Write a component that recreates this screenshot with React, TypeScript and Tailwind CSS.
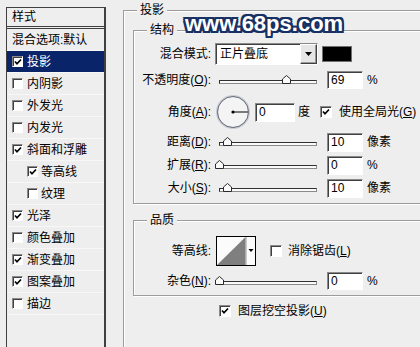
import React from "react";

const FONT = "font-['Liberation_Sans','Noto_Sans_CJK_SC',sans-serif]";
const SUNKEN =
  "border border-[#8a8a8a] border-r-white border-b-white shadow-[inset_1px_1px_0_#404040] bg-white";
const RAISED =
  "border border-white border-r-[#404040] border-b-[#404040] shadow-[inset_-1px_-1px_0_#9a9a9a] bg-[#e6e6e6]";
const ETCHED = "border border-[#9c9c9c] shadow-[inset_1px_1px_0_#fff,1px_1px_0_#fff]";

type Item = { label: string; on?: boolean; box?: boolean; sub?: boolean; active?: boolean };

const items: Item[] = [
  { label: "混合选项:默认" },
  { label: "投影", box: true, on: true, active: true },
  { label: "内阴影", box: true },
  { label: "外发光", box: true },
  { label: "内发光", box: true },
  { label: "斜面和浮雕", box: true, on: true },
  { label: "等高线", box: true, on: true, sub: true },
  { label: "纹理", box: true, sub: true },
  { label: "光泽", box: true, on: true },
  { label: "颜色叠加", box: true },
  { label: "渐变叠加", box: true, on: true },
  { label: "图案叠加", box: true, on: true },
  { label: "描边", box: true },
];

function Check({ on, small }: { on?: boolean; small?: boolean }) {
  return (
    <span
      className={`${small ? "w-[11px] h-[11px]" : "w-[12px] h-[12px]"} shrink-0 flex items-center justify-center ${SUNKEN}`}
    >
      {on && (
        <svg width="8" height="8" viewBox="0 0 8 8" aria-hidden="true">
          <path d="M1 3.5 L3 5.8 L7 1.5" fill="none" stroke="#000" strokeWidth="1.7" />
        </svg>
      )}
    </span>
  );
}

function StyleList() {
  return (
    <div className="ml-[6px] mt-[7px] w-[100px] h-[345px] shrink-0 border border-[#404040] border-r-2 bg-[#eeeeee]">
      <div className="h-[21px] pl-[5px] flex items-center border-b-[3px] border-double border-[#404040]">
        样式
      </div>
      {items.map((it) => (
        <div
          key={it.label}
          className={`h-[22px] flex items-center border-b border-b-[#f7f7f7] ${it.sub ? "pl-[20px]" : "pl-[5px]"} ${
            it.active ? "bg-[#0a246a] text-white" : ""
          }`}
        >
          {it.box && <Check on={it.on} small />}
          <span className={it.box ? (it.sub ? "ml-[3px]" : "ml-[4px]") : ""}>{it.label}</span>
        </div>
      ))}
    </div>
  );
}

function Legend({ children }: { children: React.ReactNode }) {
  return (
    <div className="-mt-[9px] ml-[13px] flex">
      <span className="bg-[#eeeeee] px-[3px]">{children}</span>
    </div>
  );
}

function Slider({ pct }: { pct: number }) {
  return (
    <div className="relative ml-[4px] w-[106px] h-[10px] shrink-0">
      <div className="mt-[5px] ml-[4px] w-[98px] h-[4px] border border-[#8a8a8a] border-t-[#303030] border-l-[#303030] bg-[#fafafa]" />
      <svg
        className="absolute top-0"
        style={{ left: 4 + pct * 98 - 4.5 }}
        width="9"
        height="9"
        viewBox="0 0 9 9"
        aria-hidden="true"
      >
        <polygon points="0.5,8.5 0.5,4 4.5,0.5 8.5,4 8.5,8.5" fill="#fafafa" stroke="#2a2a2a" />
      </svg>
    </div>
  );
}

function Field({ value, w = "w-[36px]", h = "h-[18px]" }: { value: string; w?: string; h?: string }) {
  return (
    <div className={`${w} ${h} shrink-0 flex items-center pl-[3px] ${SUNKEN}`}>{value}</div>
  );
}

function SliderRow({
  label,
  pct,
  value,
  unit,
  mt,
}: {
  label: React.ReactNode;
  pct: number;
  value: string;
  unit: string;
  mt: string;
}) {
  return (
    <div className={`${mt} h-[20px] flex items-center`}>
      <span className="w-[77px] text-right shrink-0">{label}</span>
      <Slider pct={pct} />
      <div className="ml-[6px]">
        <Field value={value} h="h-[19px]" />
      </div>
      <span className="ml-[4px]">{unit}</span>
    </div>
  );
}

export default function App() {
  return (
    <div
      className={`relative w-[420px] h-[347px] overflow-hidden bg-[#eeeeee] text-[12px] leading-[16px] text-black flex items-start ${FONT}`}
    >
      <StyleList />

      {/* 投影 */}
      <div className="ml-[17px] mt-[10px] w-[330px] h-[345px] shrink-0 border-t border-l border-[#9c9c9c] shadow-[inset_1px_1px_0_#fff]">
        <Legend>投影</Legend>

        {/* 结构 */}
        <div className={`ml-[9px] mt-[12px] w-[310px] pb-[5px] ${ETCHED}`}>
          <Legend>结构</Legend>

          <div className="mt-[5px] h-[22px] flex items-center">
            <span className="w-[77px] text-right shrink-0">混合模式:</span>
            <div className={`ml-[4px] w-[103px] h-[22px] flex items-stretch ${SUNKEN}`}>
              <span className="flex-1 pl-[4px] flex items-center">正片叠底</span>
              <span className={`w-[17px] flex items-center justify-center ${RAISED}`}>
                <svg width="7" height="4" viewBox="0 0 7 4" aria-hidden="true">
                  <polygon points="0,0 7,0 3.5,4" fill="#000" />
                </svg>
              </span>
            </div>
            <div className="ml-[4px] w-[30px] h-[16px] bg-black border border-[#707070]" />
          </div>

          <div className="mt-[6px] h-[18px] flex items-center">
            <span className="w-[77px] text-right shrink-0">
              不透明度(<u>O</u>):
            </span>
            <Slider pct={0.69} />
            <div className="ml-[6px]">
              <Field value="69" />
            </div>
            <span className="ml-[4px]">%</span>
          </div>

          <div className="mt-[5px] h-[36px] flex items-center">
            <span className="w-[77px] text-right shrink-0">
              角度(<u>A</u>):
            </span>
            <svg className="ml-[5px] shrink-0" width="34" height="34" viewBox="0 0 34 34" aria-hidden="true">
              <circle cx="17" cy="17" r="16" fill="#f4f4f4" stroke="#c8cbd4" strokeWidth="2" />
              <circle cx="17" cy="17" r="15.5" fill="none" stroke="#6a6e7a" strokeWidth="1" />
              <line x1="17" y1="17" x2="32" y2="17" stroke="#000" strokeWidth="1" />
              <circle cx="17" cy="17" r="1.6" fill="#000" />
            </svg>
            <div className="ml-[5px]">
              <Field value="0" w="w-[40px]" h="h-[19px]" />
            </div>
            <span className="ml-[3px]">度</span>
            <span className="ml-[10px]">
              <Check on />
            </span>
            <span className="ml-[7px]">
              使用全局光(<u>G</u>)
            </span>
          </div>

          <SliderRow mt="mt-[2px]" label={<>距离(<u>D</u>):</>} pct={0.09} value="10" unit="像素" />
          <SliderRow mt="mt-[3px]" label={<>扩展(<u>R</u>):</>} pct={0} value="0" unit="%" />
          <SliderRow mt="mt-[3px]" label={<>大小(<u>S</u>):</>} pct={0.09} value="10" unit="像素" />
        </div>

        {/* 品质 */}
        <div className={`ml-[9px] mt-[16px] w-[310px] pb-[5px] ${ETCHED}`}>
          <Legend>品质</Legend>

          <div className="mt-[8px] h-[30px] flex items-center">
            <span className="w-[77px] text-right shrink-0">等高线:</span>
            <svg className="ml-[5px] shrink-0" width="40" height="30" viewBox="0 0 40 30" aria-hidden="true">
              <rect x="0.5" y="0.5" width="39" height="29" fill="#fbfbfb" stroke="#000" />
              <polygon points="1,29 29.5,1 29.5,29" fill="#7f7f7f" />
              <line x1="30" y1="1" x2="30" y2="29" stroke="#9a9a9a" />
              <polygon points="32.5,13 37.5,13 35,16" fill="#000" />
            </svg>
            <span className="ml-[14px]">
              <Check />
            </span>
            <span className="ml-[6px]">
              消除锯齿(<u>L</u>)
            </span>
          </div>

          <div className="mt-[6px] h-[18px] flex items-center">
            <span className="w-[77px] text-right shrink-0">
              杂色(<u>N</u>):
            </span>
            <Slider pct={0} />
            <div className="ml-[6px]">
              <Field value="0" />
            </div>
            <span className="ml-[4px]">%</span>
          </div>
        </div>

        <div className="mt-[7px] ml-[95px] h-[16px] flex items-center">
          <Check on />
          <span className="ml-[7px]">
            图层挖空投影(<u>U</u>)
          </span>
        </div>
      </div>

      {/* watermark */}
      <div className="absolute left-[185px] top-[12px] font-['Liberation_Sans',sans-serif] font-bold text-[22px] leading-[24px] text-white [text-shadow:2px_0_0_#173063,-2px_0_0_#173063,0_2px_0_#173063,0_-2px_0_#173063,2px_2px_0_#173063,-2px_-2px_0_#173063,2px_-2px_0_#173063,-2px_2px_0_#173063]">
        www.68ps.com
      </div>
    </div>
  );
}
